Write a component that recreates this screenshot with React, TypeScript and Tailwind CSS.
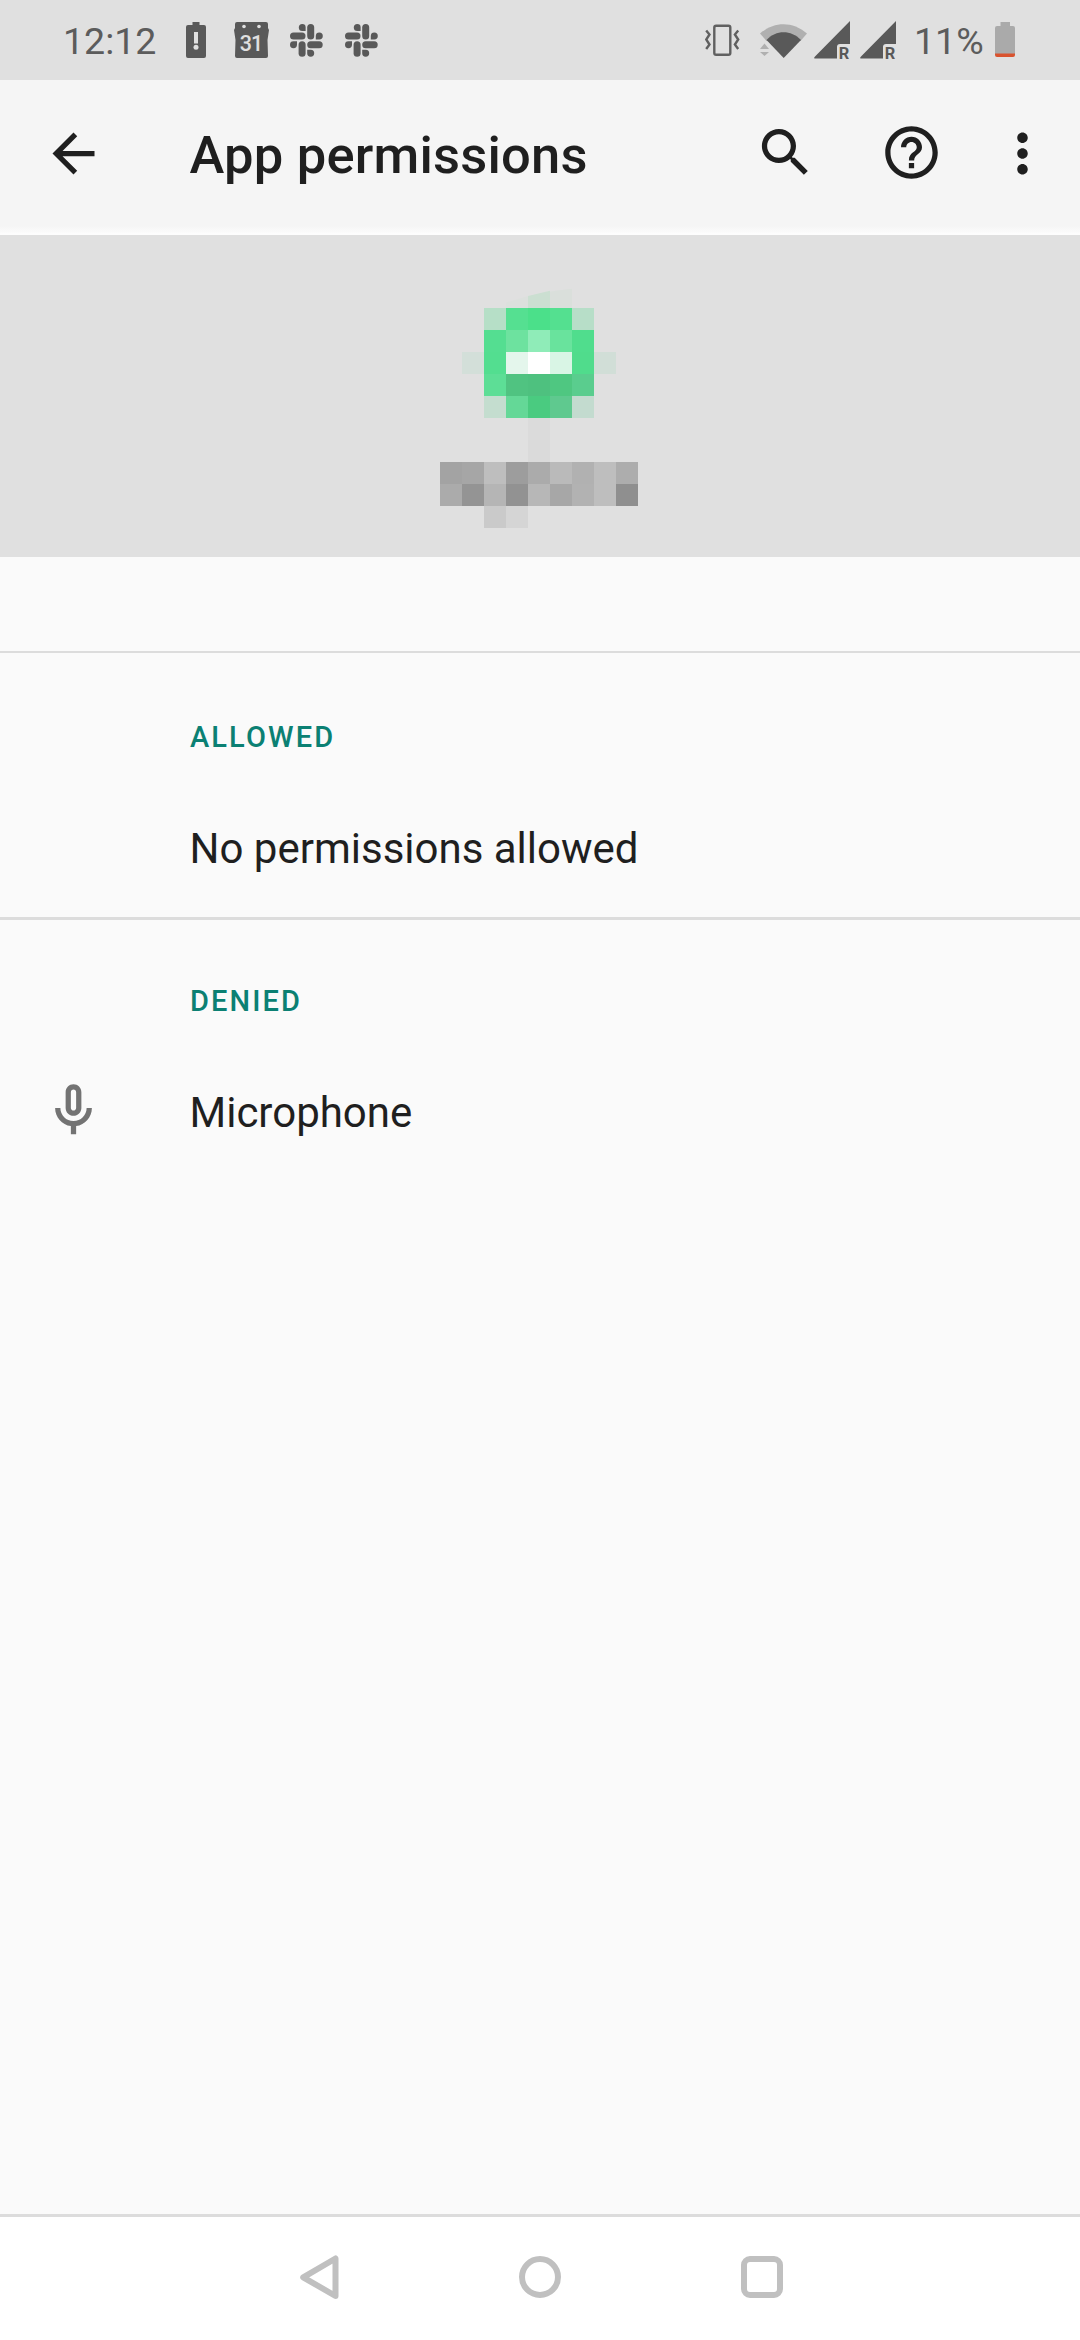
import React from "react";

const mosaic: string[][] = [
  ["", "", "", "#dce0dd", "#cbdfd1", "#dadfdb", "", "", ""],
  ["", "", "#b6dfc7", "#55e091", "#4be08a", "#54e090", "#b7dec8", "", ""],
  ["", "", "#54de91", "#6de29f", "#8fecb8", "#69e39d", "#50dd8d", "", ""],
  ["", "#d3dfd9", "#53de90", "#e4f6ec", "#ffffff", "#d9f5e5", "#50dc8c", "#d1ded7", ""],
  ["", "", "#5dde96", "#50c381", "#4ec17f", "#4fc781", "#5acd8e", "", ""],
  ["", "", "#c4ddcf", "#64d897", "#4acb80", "#5fc98f", "#c3dbcf", "", ""],
  ["", "", "", "", "#dbdbdb", "", "", "", ""],
  ["", "", "", "", "#dadada", "", "", "", ""],
  ["#a3a3a3", "#a6a6a6", "#bebebe", "#9d9d9d", "#ababab", "#bababa", "#b1b1b1", "#bebebe", "#adadad"],
  ["#ababab", "#949494", "#b5b5b5", "#929292", "#b7b7b7", "#a7a7a7", "#b2b2b2", "#bebebe", "#8f8f8f"],
  ["", "", "#cacaca", "#d5d5d5", "", "", "", "", ""],
];

// The first row is only partly covered: its top edge slopes up to the right.
const slopedEdges: Record<number, string> = {
  3: "[clip-path:polygon(0_75%,100%_45%,100%_100%,0_100%)]",
  4: "[clip-path:polygon(0_45%,100%_22%,100%_100%,0_100%)]",
  5: "[clip-path:polygon(0_25%,100%_12%,100%_100%,0_100%)]",
};

function LowBattery() {
  return (
    <svg className="h-9 w-5" viewBox="0 0 20 36" fill="none">
      <path d="M6.500 0h7v3H18q2 0 2 2v29q0 2-2 2H2q-2 0-2-2V5q0-2 2-2h4.500z" fill="#595959" />
      <path d="M8 10h4v11.500H8z" fill="#e0e0e0" />
      <circle cx="10" cy="25.300" r="2.500" fill="#e0e0e0" />
    </svg>
  );
}

function Calendar() {
  return (
    <svg className="h-9 w-[35px]" viewBox="0 0 35 36">
      <path d="M3 0h29q2 0 2 2v4l1 2-1.500 10L34 34q0 2-2 2H3q-2 0-2-2l.5-16L0 8l1-2V2q0-2 2-2z" fill="#595959" />
      <circle cx="10" cy="4.500" r="1.800" fill="#e0e0e0" />
      <circle cx="25" cy="4.500" r="1.800" fill="#e0e0e0" />
      <text x="17" y="28.800" textAnchor="middle" fontFamily="Roboto" fontWeight="500" fontSize="21.500" letterSpacing="-1" fill="#e0e0e0">31</text>
    </svg>
  );
}

function Slack() {
  return (
    <svg className="size-[33px]" viewBox="0 0 33 33" fill="#595959">
      <rect x="0" y="8.500" width="15.500" height="7" rx="3.500" />
      <path d="M12.300 0a3.300 3.300 0 0 1 3.300 3.300V7h-3.300a3.500 3.500 0 0 1 0-7z" />
      <rect x="17.200" y="0" width="7" height="15.500" rx="3.500" />
      <path d="M25.800 15.500v-3.600a3.500 3.500 0 1 1 3.500 3.600z" />
      <rect x="17.200" y="17.200" width="15.500" height="7" rx="3.500" />
      <path d="M17.200 25.700h3.600a3.500 3.500 0 1 1-3.600 3.500z" />
      <rect x="8.600" y="17.200" width="7" height="15.500" rx="3.500" />
      <path d="M7 17.200v3.600a3.500 3.500 0 1 1-3.500-3.600z" />
    </svg>
  );
}

function Vibrate() {
  return (
    <svg className="h-8 w-[35px]" viewBox="0 0 35 32" fill="none" stroke="#606060" strokeWidth="2.400">
      <rect x="9.300" y="1.700" width="16" height="29" rx="1.800" />
      <path d="M1.200 6.500l3.300 4-3.300 5 3.300 5-3.300 4.500M33.200 6.500l-3.300 4 3.300 5-3.300 5 3.300 4.500" />
    </svg>
  );
}

function Wifi() {
  return (
    <svg className="h-[34px] w-[47px]" viewBox="0 0 47 34">
      <path d="M0 9.500C14-3 33-3 47 9.500L40.500 17H6.500z" fill="#b0b0b0" />
      <path d="M6.500 16C16 5.700 31 5.700 41 16L23.700 34z" fill="#595959" />
      <path d="M0 25l4.500-5.500L9 25zM0 28h9l-4.500 4z" fill="#b0b0b0" />
    </svg>
  );
}

function Signal() {
  return (
    <svg className="h-[39px] w-9 overflow-visible" viewBox="0 0 36 39">
      <path d="M36 0v23H26q-3 0-3 3v11.500H1.500Q-1 37.500 1 35.500z" fill="#595959" />
      <text x="24.800" y="37.800" fontFamily="Roboto" fontWeight="700" fontSize="17" textLength="10.500" lengthAdjust="spacingAndGlyphs" fill="#595959">R</text>
    </svg>
  );
}

function Battery() {
  return (
    <svg className="h-[35px] w-5" viewBox="0 0 20 35">
      <path d="M5.500 0h9.500v4h3q2 0 2 2v26H0V6q0-2 2-2h3.500z" fill="#aaaaaa" />
      <path d="M0 31.500h20V33q0 2-2 2H2q-2 0-2-2z" fill="#d9532f" />
    </svg>
  );
}

function Glyph({ d, className }: { d: string; className: string }) {
  return (
    <svg viewBox="0 0 24 24" fill="currentColor" className={className}>
      <path d={d} />
    </svg>
  );
}

export default function App() {
  return (
    <div className="flex h-[2340px] w-[1080px] flex-col overflow-hidden bg-[#fafafa] font-['Roboto',sans-serif] text-[#1f1f1f]">
      <div className="flex h-20 shrink-0 items-start bg-[#e0e0e0] text-[37.500px] leading-[44px] text-[#5c5c5c]">
        <span className="ml-[63px] mt-[19px] w-[123px]">12:12</span>
        <div className="mt-[22px] flex items-start">
          <LowBattery />
          <div className="ml-[27.500px]"><Calendar /></div>
          <div className="ml-[21.500px] mt-[1.500px] flex gap-[22px]">
            <Slack />
            <Slack />
          </div>
        </div>
        <div className="ml-auto mr-[65px] flex items-start">
          <div className="mt-6"><Vibrate /></div>
          <div className="ml-5 mt-6"><Wifi /></div>
          <div className="ml-[7px] mt-[21px] flex gap-2.5">
            <Signal />
            <Signal />
          </div>
          <span className="ml-[18px] mt-[19px] w-[81px] whitespace-nowrap">11%</span>
          <div className="mt-[22px]"><Battery /></div>
        </div>
      </div>

      <header className="flex h-[155px] shrink-0 items-start bg-[linear-gradient(to_bottom,#f5f5f5_146px,#f9f9f9_150px,#fafafa_152px,#fdfdfd_153px)]">
        <Glyph className="ml-[42px] mt-[42px] size-[63px]" d="M20 11H7.830l5.590-5.590L12 4l-8 8 8 8 1.410-1.410L7.830 13H20v-2z" />
        <h1 className="ml-[84.500px] mt-[45px] text-[52.500px] font-medium leading-[60px] tracking-[0.200px]">App permissions</h1>
        <Glyph className="ml-auto mt-[41px] size-[63px]" d="M15.500 14h-.79l-.28-.27C15.410 12.590 16 11.110 16 9.500 16 5.910 13.090 3 9.500 3S3 5.910 3 9.500 5.910 16 9.500 16c1.610 0 3.090-.59 4.230-1.570l.27.28v.79l5 4.990L20.490 19l-4.990-5zm-6 0C7.010 14 5 11.990 5 9.500S7.010 5 9.500 5 14 7.010 14 9.500 11.990 14 9.500 14z" />
        <Glyph className="ml-[63px] mt-[41px] size-[63px]" d="M11 18h2v-2h-2v2zm1-16C6.480 2 2 6.480 2 12s4.480 10 10 10 10-4.480 10-10S17.520 2 12 2zm0 18c-4.410 0-8-3.590-8-8s3.590-8 8-8 8 3.590 8 8-3.590 8-8 8zm0-14c-2.210 0-4 1.790-4 4h2c0-1.100.9-2 2-2s2 .9 2 2c0 2-3 1.750-3 5h2c0-2.250 3-2.500 3-5 0-2.210-1.790-4-4-4z" />
        <Glyph className="ml-12 mr-[26px] mt-[42px] size-[63px]" d="M12 8c1.100 0 2-.9 2-2s-.9-2-2-2-2 .9-2 2 .9 2 2 2zm0 2c-1.100 0-2 .9-2 2s.9 2 2 2 2-.9 2-2-.9-2-2-2zm0 6c-1.100 0-2 .9-2 2s.9 2 2 2 2-.9 2-2-.9-2-2-2z" />
      </header>

      <section className="h-[322px] shrink-0 bg-[#e0e0e0] pl-[440px] pt-[51px]">
        <div className="grid w-[198px] grid-cols-9">
          {mosaic.flat().map((color, i) => (
            <div key={i} className={`size-[22px] ${slopedEdges[i] ?? ""}`} style={{ backgroundColor: color || "transparent" }} />
          ))}
        </div>
      </section>

      <div className="h-[96px] shrink-0 border-b-2 border-[#dcdcdc]" />

      <section className="h-[267px] shrink-0 border-b-[3px] border-[#dcdcdc] pl-[190px]">
        <h2 className="pt-[67px] text-[29px] font-medium leading-[34px] tracking-[2.100px] text-[#0b8073]">ALLOWED</h2>
        <p className="-ml-[0.500px] mt-[70px] text-[42px] leading-[50px]">No permissions allowed</p>
      </section>

      <section className="flex-1">
        <h2 className="pl-[190px] pt-[64px] text-[29px] font-medium leading-[34px] tracking-[2.100px] text-[#0b8073]">DENIED</h2>
        <div className="mt-[61px] flex items-start">
          <Glyph className="ml-[42px] size-[63px] text-[#737373]" d="M12 14c1.660 0 3-1.340 3-3V5c0-1.660-1.340-3-3-3S9 3.340 9 5v6c0 1.660 1.340 3 3 3zm-1-9c0-.55.450-1 1-1s1 .45 1 1v6c0 .55-.45 1-1 1s-1-.45-1-1V5zm6 6c0 2.760-2.240 5-5 5s-5-2.240-5-5H5c0 3.530 2.610 6.430 6 6.920V21h2v-3.080c3.390-.49 6-3.390 6-6.920h-2z" />
          <p className="ml-[84.500px] mt-[9px] text-[42px] leading-[50px]">Microphone</p>
        </div>
      </section>

      <nav className="flex h-[126px] shrink-0 items-start border-t-[3px] border-[#dcdcdc] bg-white pl-[300px] pt-[38px] text-[#c0c0c0]">
        <svg className="h-11 w-10" viewBox="0 0 40 44" fill="none" stroke="currentColor" strokeWidth="6" strokeLinejoin="round">
          <path d="M3.200 22.300L35.500 3.500v37.500z" />
        </svg>
        <div className="ml-[179px] mt-px size-[42px] rounded-full border-[6px] border-current" />
        <div className="ml-[180px] mt-px size-[42px] rounded-[9px] border-[6px] border-current" />
      </nav>
    </div>
  );
}
